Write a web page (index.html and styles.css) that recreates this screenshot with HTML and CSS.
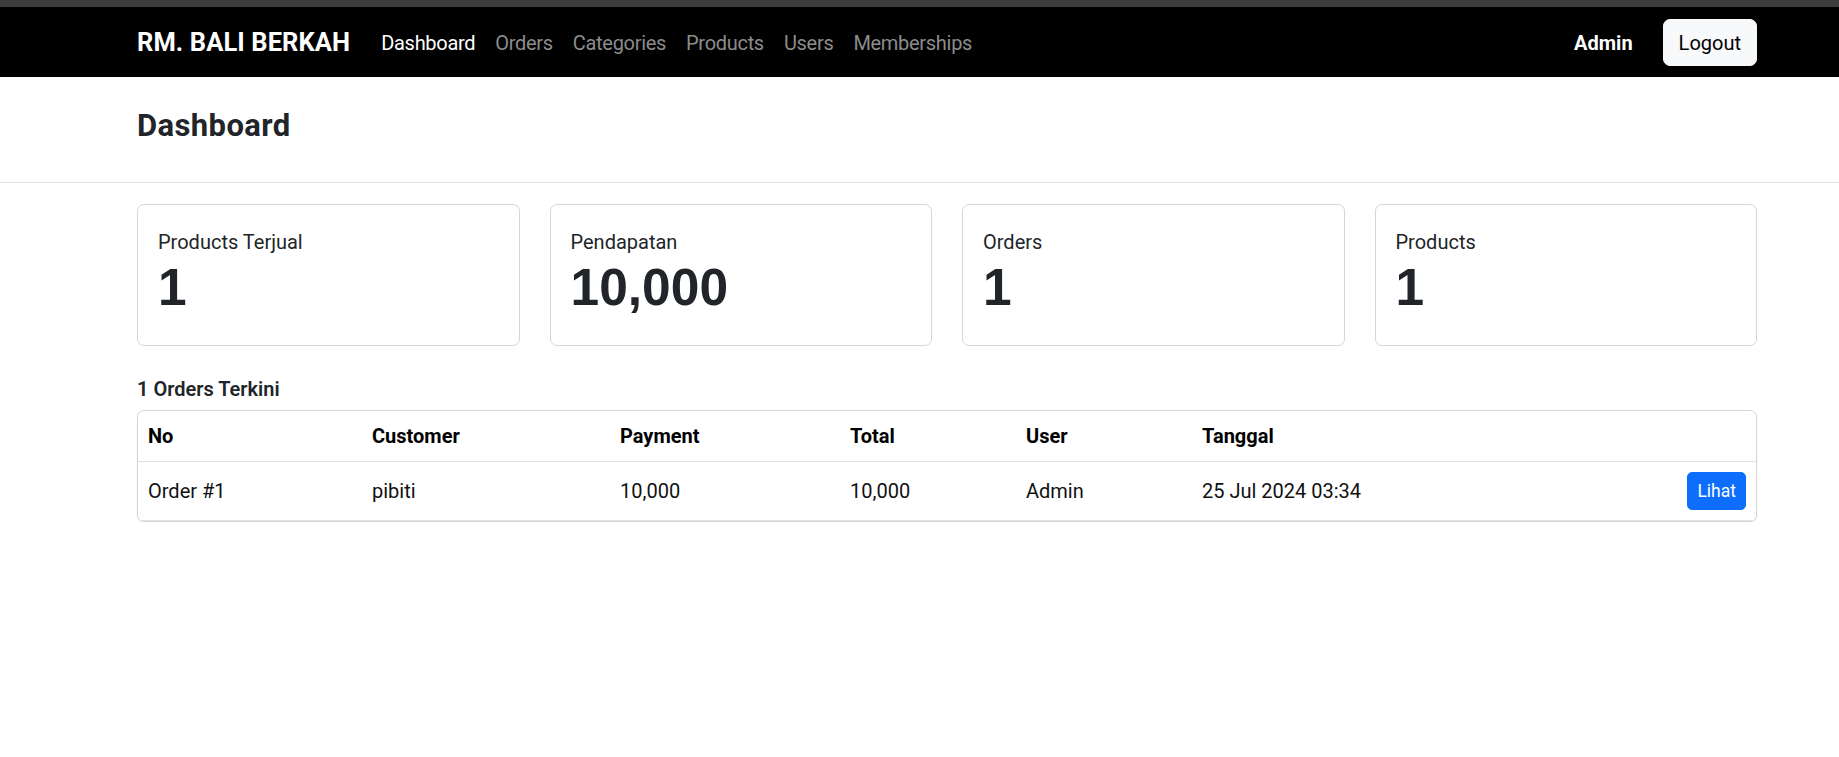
FILE: index.html
```html
<!DOCTYPE html>
<html lang="id">
<head>
<meta charset="utf-8">
<title>Dashboard - RM. Bali Berkah</title>
<link rel="stylesheet" href="styles.css">
</head>
<body>
<div class="topstrip"></div>
<nav class="navbar">
  <div class="container nav-inner">
    <a class="brand" href="#">RM. BALI BERKAH</a>
    <ul class="nav-links">
      <li><a class="nav-link active" href="#">Dashboard</a></li>
      <li><a class="nav-link" href="#">Orders</a></li>
      <li><a class="nav-link" href="#">Categories</a></li>
      <li><a class="nav-link" href="#">Products</a></li>
      <li><a class="nav-link" href="#">Users</a></li>
      <li><a class="nav-link" href="#">Memberships</a></li>
    </ul>
    <div class="nav-right">
      <span class="nav-user">Admin</span>
      <button class="btn-logout" type="button">Logout</button>
    </div>
  </div>
</nav>

<header class="page-header">
  <div class="container">
    <h1 class="page-title">Dashboard</h1>
  </div>
</header>

<main class="container">
  <section class="stats">
    <div class="stat-card">
      <div class="stat-label">Products Terjual</div>
      <div class="stat-value">1</div>
    </div>
    <div class="stat-card">
      <div class="stat-label">Pendapatan</div>
      <div class="stat-value">10,000</div>
    </div>
    <div class="stat-card">
      <div class="stat-label">Orders</div>
      <div class="stat-value">1</div>
    </div>
    <div class="stat-card">
      <div class="stat-label">Products</div>
      <div class="stat-value">1</div>
    </div>
  </section>

  <h2 class="section-title">1 Orders Terkini</h2>
  <div class="table-card">
    <table class="orders">
      <colgroup>
        <col class="c-no"><col class="c-cust"><col class="c-pay"><col class="c-total"><col class="c-user"><col class="c-date"><col class="c-act">
      </colgroup>
      <thead>
        <tr>
          <th>No</th><th>Customer</th><th>Payment</th><th>Total</th><th>User</th><th>Tanggal</th><th></th>
        </tr>
      </thead>
      <tbody>
        <tr>
          <td>Order #1</td><td>pibiti</td><td>10,000</td><td>10,000</td><td>Admin</td><td>25 Jul 2024 03:34</td>
          <td class="act"><a class="btn-view" href="#">Lihat</a></td>
        </tr>
      </tbody>
    </table>
  </div>
</main>
</body>
</html>
```

FILE: styles.css
```css
* { box-sizing: border-box; }

body {
  margin: 0;
  font-family: Roboto, "Noto Sans", "Liberation Sans", sans-serif;
  font-size: 20px;
  line-height: 1.5;
  color: #212529;
  background: #fff;
}

.container {
  width: 1620px;
  margin-left: 137px;
}

.topstrip {
  height: 7px;
  background: #3c3c3c;
}

.navbar {
  background: #000;
  height: 70px;
}

.nav-inner {
  height: 100%;
  display: flex;
  align-items: center;
  padding-top: 1px;
}

.brand {
  color: #fff;
  font-size: 25.5px;
  font-weight: 700;
  letter-spacing: 0.1px;
  text-decoration: none;
  margin-right: 21px;
  line-height: 1.5;
}

.nav-links {
  list-style: none;
  margin: 0;
  padding: 0;
  display: flex;
}

.nav-link {
  display: block;
  padding: 0 10px;
  color: #8c8c8c;
  text-decoration: none;
  letter-spacing: -0.3px;
}

.nav-link.active { color: #fff; }

.nav-right {
  margin-left: auto;
  display: flex;
  align-items: center;
  gap: 30px;
}

.nav-user {
  color: #fff;
  font-weight: 700;
}

.btn-logout {
  height: 47px;
  padding: 0 15px;
  border: 1px solid #f8f9fa;
  border-radius: 7px;
  background: #f8f9fa;
  color: #000;
  font-family: inherit;
  font-size: 20px;
}

.page-header {
  padding: 31px 0 38px;
  border-bottom: 1px solid #dee2e6;
}

.page-title {
  margin: 0;
  font-size: 31px;
  font-weight: 700;
  letter-spacing: 0.4px;
  line-height: 36px;
}

.stats {
  margin-top: 21px;
  display: grid;
  grid-template-columns: repeat(4, 1fr);
  gap: 30px;
}

.stat-card {
  border: 1px solid #d6d6d6;
  border-radius: 7px;
  padding: 22px 20px 18px;
}

.stat-label {
  line-height: 30px;
}

.stat-value {
  font-family: "Liberation Sans", Arial, sans-serif;
  font-size: 51.5px;
  font-weight: 700;
  line-height: 60px;
  margin-bottom: 10px;
}

.section-title {
  margin: 31px 0 9px;
  font-size: 20px;
  font-weight: 600;
  line-height: 24px;
}

.table-card {
  border: 1px solid #d6d6d6;
  border-radius: 7px;
  overflow: hidden;
  box-shadow: 0 1px 2px rgba(0, 0, 0, 0.08);
}

.orders {
  width: 100%;
  border-collapse: collapse;
  table-layout: fixed;
  color: #111;
}

.c-no { width: 224px; }
.c-cust { width: 248px; }
.c-pay { width: 230px; }
.c-total { width: 176px; }
.c-user { width: 176px; }
.c-date { width: 485px; }
.c-act { width: 79px; }

.orders th,
.orders td {
  padding: 10px;
  text-align: left;
  line-height: 30px;
  border-bottom: 1px solid #dee2e6;
  vertical-align: middle;
}

.orders th {
  font-weight: 700;
  color: #000;
}

.orders td.act { text-align: right; }

.btn-view {
  display: inline-block;
  padding: 5px 9px;
  font-size: 17.5px;
  line-height: 26px;
  color: #fff;
  background: #0d6efd;
  border: 1px solid #0d6efd;
  border-radius: 5px;
  text-decoration: none;
  vertical-align: middle;
}
```
